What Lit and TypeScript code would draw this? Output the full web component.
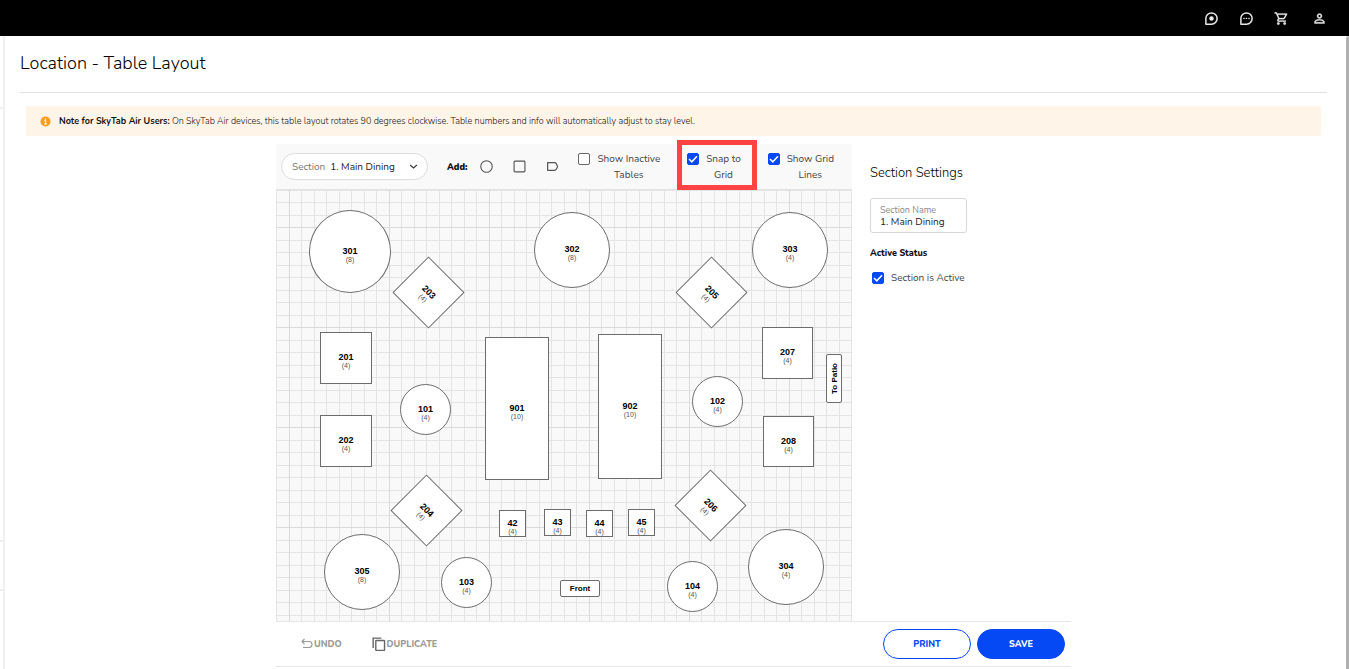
import { LitElement, html, css, svg } from "lit";
import { customElement, property, state } from "lit/decorators.js";
import { classMap } from "lit/directives/class-map.js";
import { styleMap } from "lit/directives/style-map.js";

type Shape = "circle" | "square" | "diamond" | "label" | "label-up";

interface FloorItem {
  name: string;
  seats?: number;
  shape: Shape;
  x: number;
  y: number;
  w: number;
  h: number;
}

const ITEMS: FloorItem[] = [
  { name: "301", seats: 8, shape: "circle", x: 33, y: 20, w: 82, h: 83 },
  { name: "302", seats: 8, shape: "circle", x: 258, y: 22, w: 76, h: 76 },
  { name: "303", seats: 4, shape: "circle", x: 476, y: 22, w: 76, h: 76 },
  { name: "203", seats: 4, shape: "diamond", x: 127, y: 77, w: 51, h: 51 },
  { name: "205", seats: 4, shape: "diamond", x: 410, y: 77, w: 51, h: 51 },
  { name: "201", seats: 4, shape: "square", x: 44, y: 142, w: 52, h: 52 },
  { name: "202", seats: 4, shape: "square", x: 44, y: 225, w: 52, h: 52 },
  { name: "207", seats: 4, shape: "square", x: 486, y: 137, w: 51, h: 52 },
  { name: "208", seats: 4, shape: "square", x: 487, y: 226, w: 51, h: 51 },
  { name: "101", seats: 4, shape: "circle", x: 124, y: 194, w: 51, h: 51 },
  { name: "102", seats: 4, shape: "circle", x: 416, y: 186, w: 51, h: 51 },
  { name: "901", seats: 10, shape: "square", x: 209, y: 147, w: 64, h: 143 },
  { name: "902", seats: 10, shape: "square", x: 322, y: 144, w: 64, h: 145 },
  { name: "204", seats: 4, shape: "diamond", x: 125, y: 295, w: 51, h: 51 },
  { name: "206", seats: 4, shape: "diamond", x: 409, y: 290, w: 51, h: 51 },
  { name: "42", seats: 4, shape: "square", x: 223, y: 320, w: 27, h: 27 },
  { name: "43", seats: 4, shape: "square", x: 268, y: 319, w: 27, h: 27 },
  { name: "44", seats: 4, shape: "square", x: 310, y: 320, w: 27, h: 27 },
  { name: "45", seats: 4, shape: "square", x: 352, y: 319, w: 27, h: 27 },
  { name: "305", seats: 8, shape: "circle", x: 48, y: 344, w: 76, h: 76 },
  { name: "103", seats: 4, shape: "circle", x: 165, y: 367, w: 51, h: 51 },
  { name: "104", seats: 4, shape: "circle", x: 391, y: 371, w: 51, h: 51 },
  { name: "304", seats: 4, shape: "circle", x: 472, y: 339, w: 76, h: 76 },
  { name: "Front", shape: "label", x: 284, y: 390, w: 40, h: 17 },
  { name: "To Patio", shape: "label-up", x: 550, y: 164, w: 16, h: 49 },
];

const ICONS = {
  locate: svg`<path d="M3 21V12a9 9 0 1 1 9 9z" fill="none" stroke="currentColor" stroke-width="2.4" stroke-linejoin="round"/><circle cx="12" cy="12" r="3.6" fill="currentColor"/>`,
  chat: svg`<path d="M3 21V12a9 9 0 1 1 9 9z" fill="none" stroke="currentColor" stroke-width="2.4" stroke-linejoin="round"/><circle cx="8" cy="12" r="1.3" fill="currentColor"/><circle cx="12" cy="12" r="1.3" fill="currentColor"/><circle cx="16" cy="12" r="1.3" fill="currentColor"/>`,
  cart: svg`<path fill="currentColor" stroke="currentColor" stroke-width=".4" d="M15.55 13c.75 0 1.41-.41 1.75-1.03l3.58-6.49A.996.996 0 0 0 20.01 4H5.21l-.94-2H1v2h2l3.6 7.59-1.35 2.44C4.52 15.37 5.48 17 7 17h12v-2H7l1.1-2h7.45zM6.16 6h12.15l-2.76 5H8.53L6.16 6zM7 18c-1.1 0-1.99.9-1.99 2S5.9 22 7 22s2-.9 2-2-.9-2-2-2zm10 0c-1.1 0-1.99.9-1.99 2s.89 2 1.99 2 2-.9 2-2-.9-2-2-2z"/>`,
  person: svg`<path fill="currentColor" stroke="currentColor" stroke-width=".6" d="M12 5.9a2.1 2.1 0 1 1 0 4.2 2.1 2.1 0 0 1 0-4.2m0 9c2.97 0 6.1 1.46 6.1 2.1v1.1H5.9V17c0-.64 3.13-2.1 6.1-2.1M12 4C9.79 4 8 5.79 8 8s1.79 4 4 4 4-1.79 4-4-1.79-4-4-4zm0 9c-2.67 0-8 1.34-8 4v3h16v-3c0-2.66-5.33-4-8-4z"/>`,
  info: svg`<circle cx="12" cy="12" r="11" fill="#f99d1c"/><path d="M9.500 10.500h3V17M9 17.500h6" fill="none" stroke="#fff" stroke-width="2.200"/><circle cx="12" cy="6.500" r="1.800" fill="#fff"/>`,
  chevron: svg`<path d="M3 8l9 8 9-8" fill="none" stroke="currentColor" stroke-width="2.800"/>`,
  circle: svg`<circle cx="12" cy="12" r="10.6" fill="none" stroke="currentColor" stroke-width="2"/>`,
  square: svg`<rect x="2" y="2" width="20" height="20" rx="1.5" fill="none" stroke="currentColor" stroke-width="2.1"/>`,
  tag: svg`<path d="M3 5h13q2 0 3 2l2.500 5-2.500 5q-1 2-3 2H3z" fill="none" stroke="currentColor" stroke-width="2.2" stroke-linejoin="round"/>`,
  undo: svg`<path d="M7 2L2 7l5 5M2.500 7H16a5.500 5.500 0 0 1 0 12H4" fill="none" stroke="currentColor" stroke-width="2.3"/>`,
  copy: svg`<path d="M2 19V2h14" fill="none" stroke="currentColor" stroke-width="2.4"/><rect x="6.500" y="6" width="15" height="17" rx="1" fill="none" stroke="currentColor" stroke-width="2.4"/>`,
};

@customElement("ui-icon")
class UiIcon extends LitElement {
  static styles = css`
    :host { display: inline-flex; width: 16px; height: 16px; flex: none; }
    svg { width: 100%; height: 100%; display: block; }
  `;
  @property() name: keyof typeof ICONS = "info";
  render() {
    return html`<svg viewBox="0 0 24 24" aria-hidden="true">${ICONS[this.name]}</svg>`;
  }
}

@customElement("floor-plan")
class FloorPlan extends LitElement {
  static styles = css`
    :host { display: block; }
    .canvas { position: relative; height: 431px; overflow: hidden; background-color: #f9f9f9; }
    .grid {
      background-image:
        linear-gradient(to right, #dadada 1px, transparent 1px),
        linear-gradient(to bottom, #dadada 1px, transparent 1px),
        linear-gradient(to right, #e4e4e4 1px, transparent 1px, transparent 13px, #e4e4e4 13px, #e4e4e4 14px, transparent 14px),
        linear-gradient(to bottom, #e4e4e4 1px, transparent 1px, transparent 13px, #e4e4e4 13px, #e4e4e4 14px, transparent 14px);
      background-size: 100px 100%, 100% 100px, 25px 100%, 100% 25px;
      background-position: 13px 0, 0 37px, 0 0, 0 12px;
    }
    .item {
      position: absolute; box-sizing: border-box; margin: 0; padding: 7px 0 0;
      display: flex; flex-direction: column; align-items: center; justify-content: center;
      background: #fff; border: 1px solid #6c6c6c; color: #000;
      font-family: "Liberation Sans", Arial, sans-serif; cursor: move;
    }
    .circle { border-radius: 50%; }
    .diamond { transform: rotate(45deg); }
    .label, .label-up { padding: 0; border-radius: 2px; }
    .label-up .name { writing-mode: vertical-rl; transform: rotate(180deg); }
    .name { font-size: 9px; line-height: 9px; font-weight: 700; }
    .label .name, .label-up .name { font-size: 8px; }
    .seats { font-size: 7px; line-height: 8px; color: #555; }
  `;
  @property({ type: Boolean }) grid = true;
  render() {
    return html`<div class=${classMap({ canvas: true, grid: this.grid })}>
      ${ITEMS.map(
        (t) => html`<button
          class="item ${t.shape}"
          style=${styleMap({ left: `${t.x}px`, top: `${t.y}px`, width: `${t.w}px`, height: `${t.h}px` })}
        ><span class="name">${t.name}</span>${t.seats ? html`<span class="seats">(${t.seats})</span>` : null}</button>`
      )}
    </div>`;
  }
}

@customElement("app-root")
class AppRoot extends LitElement {
  static styles = css`
    :host {
      display: flex; flex-direction: column; min-height: 100vh; background: #fff; color: #222;
      font-family: Nunito, "Open Sans", "Noto Sans", sans-serif; font-size: 10px; line-height: 16px;
    }
    * { box-sizing: border-box; }
    button, input, select { font: inherit; color: inherit; margin: 0; }
    button { cursor: pointer; }
    .topbar {
      height: 36px; background: #000; color: #e8e8e8; display: flex; align-items: center;
      justify-content: flex-end; gap: 20px; padding-right: 22px;
    }
    .topbar button { background: none; border: 0; padding: 0; display: flex; }
    .topbar .account { margin-left: 3px; }
    .topbar ui-icon { width: 15px; height: 15px; }
    .shell { flex: 1; display: flex; }
    .rail { width: 5px; border-right: 2px solid #f0f0f0; display: flex; flex-direction: column; }
    .rail span { border-bottom: 2px solid #f0f0f0; height: 49px; }
    .rail .first { height: 73px; }
    .rail .second { height: 433px; }
    .thumb { width: 3px; background: #b0b0b0; border-top-left-radius: 3px; }
    main { flex: 1; min-width: 0; padding: 0 19px 0 15px; }
    h1 { margin: 0; padding: 15px 0 17px; font-size: 18px; line-height: 24px; font-weight: 300; color: #000; border-bottom: 1px solid #e2e2e2; }
    .note {
      margin: 13px 6px 8px; min-height: 30px; padding: 0 14px; background: #fff4e8; border-radius: 2px;
      display: flex; align-items: center; gap: 8px; font-size: 9px; font-weight: 300; color: #111;
    }
    .note ui-icon { width: 11px; height: 11px; }
    .note p { margin: 0; }
    .note strong { color: #111; font-weight: 700; }
    .editor { max-width: 795px; margin: 0 auto; }
    .work { display: grid; grid-template-columns: 576px 1fr; }
    .toolbar {
      height: 46px; background: #f9f9f9; border-bottom: 1px solid #e2e2e2; display: flex;
      align-items: center; padding: 0 18px 0 5px;
    }
    .picker {
      width: 147px; height: 27px; border: 1px solid #dcdcdc; border-radius: 14px; background: #fff;
      display: flex; align-items: center; padding: 0 9px 0 10px; gap: 5px; color: #777;
    }
    .picker select { appearance: none; border: 0; background: none; padding: 0; flex: 1; min-width: 0; color: #222; }
    .picker ui-icon { width: 9px; height: 9px; color: #333; }
    .add { display: flex; align-items: center; gap: 20px; margin-left: 19px; font-size: 9px; font-weight: 800; color: #111; }
    .add strong { margin-right: -7px; }
    .add button { border: 0; background: none; padding: 0; display: flex; color: #555; }
    .add ui-icon { width: 13px; height: 13px; }
    .checks { flex: 1; display: flex; justify-content: space-between; align-items: center; margin-left: 19px; }
    .check { position: relative; display: flex; align-items: flex-start; gap: 7px; text-align: center; color: #444; }
    .check input, .active input {
      appearance: none; width: 12px; height: 12px; flex: none; border: 1px solid #666; border-radius: 2px; background: #fff;
    }
    .check input { margin-top: 2px; }
    .check input:checked, .active input:checked {
      border-color: #0549f5;
      background: #0549f5 url("data:image/svg+xml,%3Csvg xmlns='http://www.w3.org/2000/svg' viewBox='0 0 12 12'%3E%3Cpath d='M2 6l2.800 2.800L10 3.300' fill='none' stroke='white' stroke-width='1.500'/%3E%3C/svg%3E") center / 12px 12px;
    }
    .highlight { position: absolute; left: -10px; top: -11px; width: 80px; height: 50px; border: 5px solid #fd4343; pointer-events: none; }
    .settings { padding: 20px 0 0 18px; }
    h2 { margin: 0 0 16px; font-size: 13px; line-height: 18px; font-weight: 300; color: #000; }
    .field {
      width: 97px; height: 35px; border: 1px solid #d8d8d8; border-radius: 3px; display: flex;
      flex-direction: column; justify-content: center; padding: 1px 9px 0; color: #888; font-size: 9px; line-height: 11px;
    }
    .field input { border: 0; padding: 0; outline: 0; width: 100%; height: 12px; color: #222; font-size: 10px; line-height: 12px; }
    h3 { margin: 12px 0 9px; font-size: 9px; line-height: 16px; font-weight: 800; color: #111; }
    .active { display: flex; align-items: center; gap: 7px; margin-left: 2px; color: #444; }
    footer {
      height: 46px; border-top: 1px solid #e6e6e6; border-bottom: 1px solid #e6e6e6; display: flex;
      align-items: center; padding: 0 6px 0 25px; font-size: 9px; font-weight: 800;
    }
    .plain { border: 0; background: none; padding: 0; display: flex; align-items: center; color: #999; gap: 1px; }
    .plain ui-icon { width: 12px; height: 12px; }
    .copy { margin-left: 30px; }
    .copy ui-icon { width: 14px; height: 14px; color: #666; }
    .pill { width: 88px; height: 30px; border-radius: 15px; border: 1px solid #0549f5; background: #fff; color: #0549f5; }
    .print { margin-left: auto; }
    .save { margin-left: 6px; background: #0549f5; color: #fff; }
  `;
  @state() private inactive = false;
  @state() private snap = true;
  @state() private lines = true;

  render() {
    return html`
      <header class="topbar">
        <button aria-label="Support"><ui-icon name="locate"></ui-icon></button>
        <button aria-label="Chat"><ui-icon name="chat"></ui-icon></button>
        <button aria-label="Cart"><ui-icon name="cart"></ui-icon></button>
        <button class="account" aria-label="Account"><ui-icon name="person"></ui-icon></button>
      </header>
      <div class="shell">
        <div class="rail"><span class="first"></span><span class="second"></span><span></span></div>
        <main>
          <h1>Location - Table Layout</h1>
          <div class="note">
            <ui-icon name="info"></ui-icon>
            <p><strong>Note for SkyTab Air Users:</strong> On SkyTab Air devices, this table layout rotates 90 degrees clockwise. Table numbers and info will automatically adjust to stay level.</p>
          </div>
          <div class="editor">
            <div class="work">
              <div>
                <div class="toolbar">
                  <label class="picker">Section
                    <select><option>1. Main Dining</option></select>
                    <ui-icon name="chevron"></ui-icon>
                  </label>
                  <div class="add">
                    <strong>Add:</strong>
                    <button aria-label="Round table"><ui-icon name="circle"></ui-icon></button>
                    <button aria-label="Square table"><ui-icon name="square"></ui-icon></button>
                    <button aria-label="Label"><ui-icon name="tag"></ui-icon></button>
                  </div>
                  <div class="checks">
                    <label class="check">
                      <input type="checkbox" .checked=${this.inactive} @change=${() => (this.inactive = !this.inactive)} />
                      <span>Show Inactive<br />Tables</span>
                    </label>
                    <label class="check">
                      <input type="checkbox" .checked=${this.snap} @change=${() => (this.snap = !this.snap)} />
                      <span>Snap to<br />Grid</span>
                      <span class="highlight"></span>
                    </label>
                    <label class="check">
                      <input type="checkbox" .checked=${this.lines} @change=${() => (this.lines = !this.lines)} />
                      <span>Show Grid<br />Lines</span>
                    </label>
                  </div>
                </div>
                <floor-plan .grid=${this.lines}></floor-plan>
              </div>
              <section class="settings">
                <h2>Section Settings</h2>
                <label class="field">Section Name<input type="text" value="1. Main Dining" /></label>
                <h3>Active Status</h3>
                <label class="active"><input type="checkbox" checked /><span>Section is Active</span></label>
              </section>
            </div>
            <footer>
              <button class="plain"><ui-icon name="undo"></ui-icon>UNDO</button>
              <button class="plain copy"><ui-icon name="copy"></ui-icon>DUPLICATE</button>
              <button class="pill print">PRINT</button>
              <button class="pill save">SAVE</button>
            </footer>
          </div>
        </main>
        <div class="thumb"></div>
      </div>
    `;
  }
}
